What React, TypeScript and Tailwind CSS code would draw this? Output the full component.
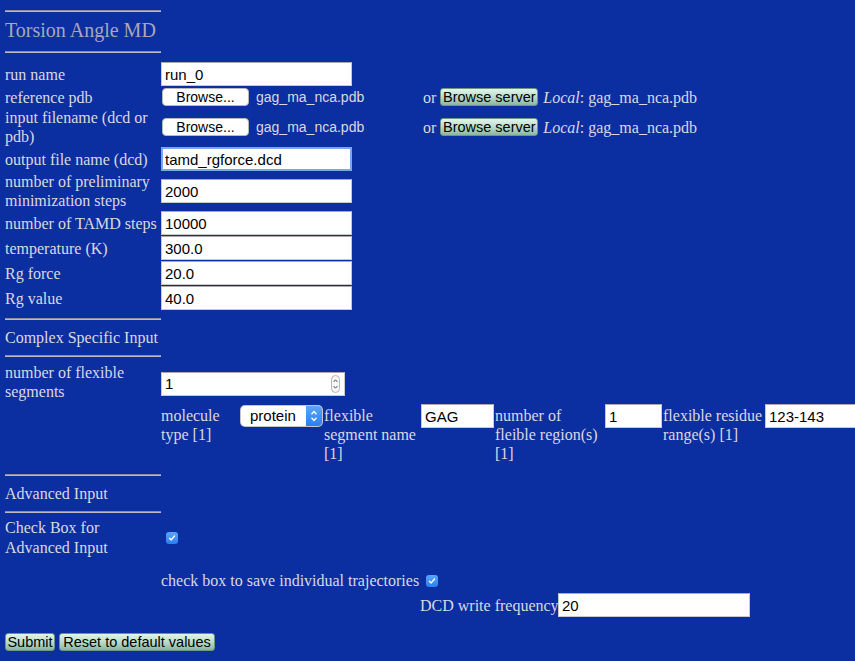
import React from 'react'

const serif = "font-['Liberation_Serif','Times_New_Roman',serif]"
const sans = "font-['Liberation_Sans',Arial,sans-serif]"

function Hr() {
  return <div className="h-[2px] w-[156px] border-t border-[#8f8c9c] bg-[#bdbac6]" />
}

function TextBox({ value, width = 'w-[191px]', focus = false }: { value: string; width?: string; focus?: boolean }) {
  return (
    <input
      readOnly
      value={value}
      className={`${sans} ${width} h-[24px] shrink-0 bg-white px-[3px] text-[15px] text-black outline-none ${
        focus ? 'border-2 border-[#79a7ee] pl-[2px]' : 'border border-[#c9c9c9] border-t-[#a9a9a9]'
      }`}
    />
  )
}

function Row({ label, children }: { label: React.ReactNode; children?: React.ReactNode }) {
  return (
    <div className="flex items-center">
      <div className="w-[156px] shrink-0">{label}</div>
      {children}
    </div>
  )
}

function GreenButton({ children, width }: { children: React.ReactNode; width: string }) {
  return (
    <div
      className={`${sans} ${width} flex h-[18px] shrink-0 items-center justify-center whitespace-nowrap rounded-[3px] border border-[#6f9483] bg-gradient-to-b from-[#e2f5ec] via-[#b9dccb] to-[#8bb5a1] text-[14.5px] leading-none text-black`}
    >
      {children}
    </div>
  )
}

function FileRow() {
  return (
    <div className="flex items-center">
      <div className="flex w-[262px] shrink-0 items-center pl-[1px]">
        <div
          className={`${sans} flex h-[18px] w-[87px] items-center justify-center rounded-[4px] border border-[#b9b9b9] bg-white text-[14px] leading-none text-black`}
        >
          Browse...
        </div>
        <span className={`${sans} ml-[7px] text-[14px] text-[#dcd8e2]`}>gag_ma_nca.pdb</span>
      </div>
      <span>or</span>
      <div className="ml-[4px]">
        <GreenButton width="w-[98px]">Browse server</GreenButton>
      </div>
      <span className="ml-[5px] whitespace-nowrap">
        <i>Local</i>: gag_ma_nca.pdb
      </span>
    </div>
  )
}

function Check() {
  return (
    <div className="flex h-[12px] w-[12px] shrink-0 items-center justify-center rounded-[3px] bg-gradient-to-b from-[#5aa6fa] to-[#2a7ff0]">
      <svg width="8" height="8" viewBox="0 0 8 8">
        <path d="M1.5 4.2 L3.2 5.9 L6.5 2" fill="none" stroke="white" strokeWidth="1.4" strokeLinecap="round" strokeLinejoin="round" />
      </svg>
    </div>
  )
}

function SectionHeader({ title }: { title: string }) {
  return (
    <div className="w-[156px]">
      <Hr />
      <div className="py-[8px] leading-[19px]">{title}</div>
      <Hr />
    </div>
  )
}

export default function App() {
  return (
    <div className={`${serif} min-h-screen w-full overflow-hidden bg-[#0b2fa1] pl-[5px] text-[16px] leading-[19px] text-[#dcd8e2]`}>
      {/* Title */}
      <div className="w-[156px] pt-[10px]">
        <Hr />
        <div className="pt-[7px] pb-[9px] text-[20px] leading-[23px] text-[#aaa7b6]">Torsion Angle MD</div>
        <Hr />
      </div>

      {/* Main inputs */}
      <div className="mt-[9px] flex flex-col gap-[1px]">
        <Row label="run name">
          <TextBox value="run_0" />
        </Row>
        <div className="flex h-[20px] items-center">
          <div className="w-[156px] shrink-0">reference pdb</div>
          <FileRow />
        </div>
        <Row label={<>input filename (dcd or<br />pdb)</>}>
          <FileRow />
        </Row>
        <Row label="output file name (dcd)">
          <TextBox value="tamd_rgforce.dcd" focus />
        </Row>
        <Row label={<>number of preliminary<br />minimization steps</>}>
          <TextBox value="2000" />
        </Row>
        <Row label="number of TAMD steps">
          <TextBox value="10000" />
        </Row>
        <Row label="temperature (K)">
          <TextBox value="300.0" />
        </Row>
        <Row label="Rg force">
          <TextBox value="20.0" />
        </Row>
        <Row label="Rg value">
          <TextBox value="40.0" />
        </Row>
      </div>

      {/* Complex specific */}
      <div className="mt-[8px]">
        <SectionHeader title="Complex Specific Input" />
      </div>
      <div className="mt-[6px]">
        <Row label={<>number of flexible<br />segments</>}>
          <div className={`${sans} mt-[3px] flex h-[24px] w-[184px] shrink-0 items-center justify-between border border-[#c9c9c9] border-t-[#a9a9a9] bg-white pl-[3px] pr-[4px] text-[15px] text-black`}>
            <span>1</span>
            <svg width="9" height="18" viewBox="0 0 9 18">
              <rect x="0.5" y="0.5" width="8" height="17" rx="4" fill="#f7f7f7" stroke="#b5b5b5" />
              <path d="M2.6 7 L4.5 4.8 L6.4 7" fill="none" stroke="#555" strokeWidth="1" />
              <path d="M2.6 11 L4.5 13.2 L6.4 11" fill="none" stroke="#555" strokeWidth="1" />
            </svg>
          </div>
        </Row>
      </div>

      {/* Segment sub row */}
      <div className="mt-[2px] ml-[156px] flex items-start">
        <div className="w-[80px] shrink-0 pt-[3px]">molecule<br />type [1]</div>
        <div className={`${sans} mt-[3px] flex h-[20px] w-[81px] shrink-0 overflow-hidden rounded-[4px] bg-white text-[15px] text-black shadow-[0_0_0_1px_#c6c6c6]`}>
          <span className="flex-1 pl-[9px] leading-[20px]">protein</span>
          <div className="flex w-[16px] items-center justify-center bg-gradient-to-b from-[#5aa6fa] to-[#2a7ff0]">
            <svg width="8" height="14" viewBox="0 0 8 14">
              <path d="M1.5 5.2 L4 2.5 L6.5 5.2" fill="none" stroke="white" strokeWidth="1.4" />
              <path d="M1.5 8.8 L4 11.5 L6.5 8.8" fill="none" stroke="white" strokeWidth="1.4" />
            </svg>
          </div>
        </div>
        <div className="w-[99px] shrink-0 pl-[2px] pt-[3px]">flexible<br />segment name<br />[1]</div>
        <div className="mt-[1px]">
          <TextBox value="GAG" width="w-[73px]" />
        </div>
        <div className="w-[111px] shrink-0 pl-[1px] pt-[3px]">number of<br />fleible region(s)<br />[1]</div>
        <div className="mt-[1px]">
          <TextBox value="1" width="w-[57px]" />
        </div>
        <div className="w-[103px] shrink-0 whitespace-nowrap pl-[1px] pt-[3px]">flexible residue<br />range(s) [1]</div>
        <div className="mt-[1px]">
          <TextBox value="123-143" width="w-[191px]" />
        </div>
      </div>

      {/* Advanced */}
      <div className="mt-[11px]">
        <SectionHeader title="Advanced Input" />
      </div>
      <div className="mt-[5px] flex items-center leading-[20px]">
        <div className="w-[156px] shrink-0">Check Box for<br />Advanced Input</div>
        <div className="ml-[5px]">
          <Check />
        </div>
      </div>

      <div className="mt-[13px] ml-[156px] flex items-center">
        <div className="w-[259px] shrink-0 whitespace-nowrap">check box to save individual trajectories</div>
        <div className="ml-[6px]">
          <Check />
        </div>
      </div>
      <div className="mt-[3px] ml-[415px] flex items-center">
        <div className="w-[138px] shrink-0 whitespace-nowrap">DCD write frequency</div>
        <TextBox value="20" width="w-[192px]" />
      </div>

      {/* Buttons */}
      <div className="mt-[16px] flex gap-[4px]">
        <GreenButton width="w-[50px]">Submit</GreenButton>
        <GreenButton width="w-[156px]">Reset to default values</GreenButton>
      </div>
    </div>
  )
}
